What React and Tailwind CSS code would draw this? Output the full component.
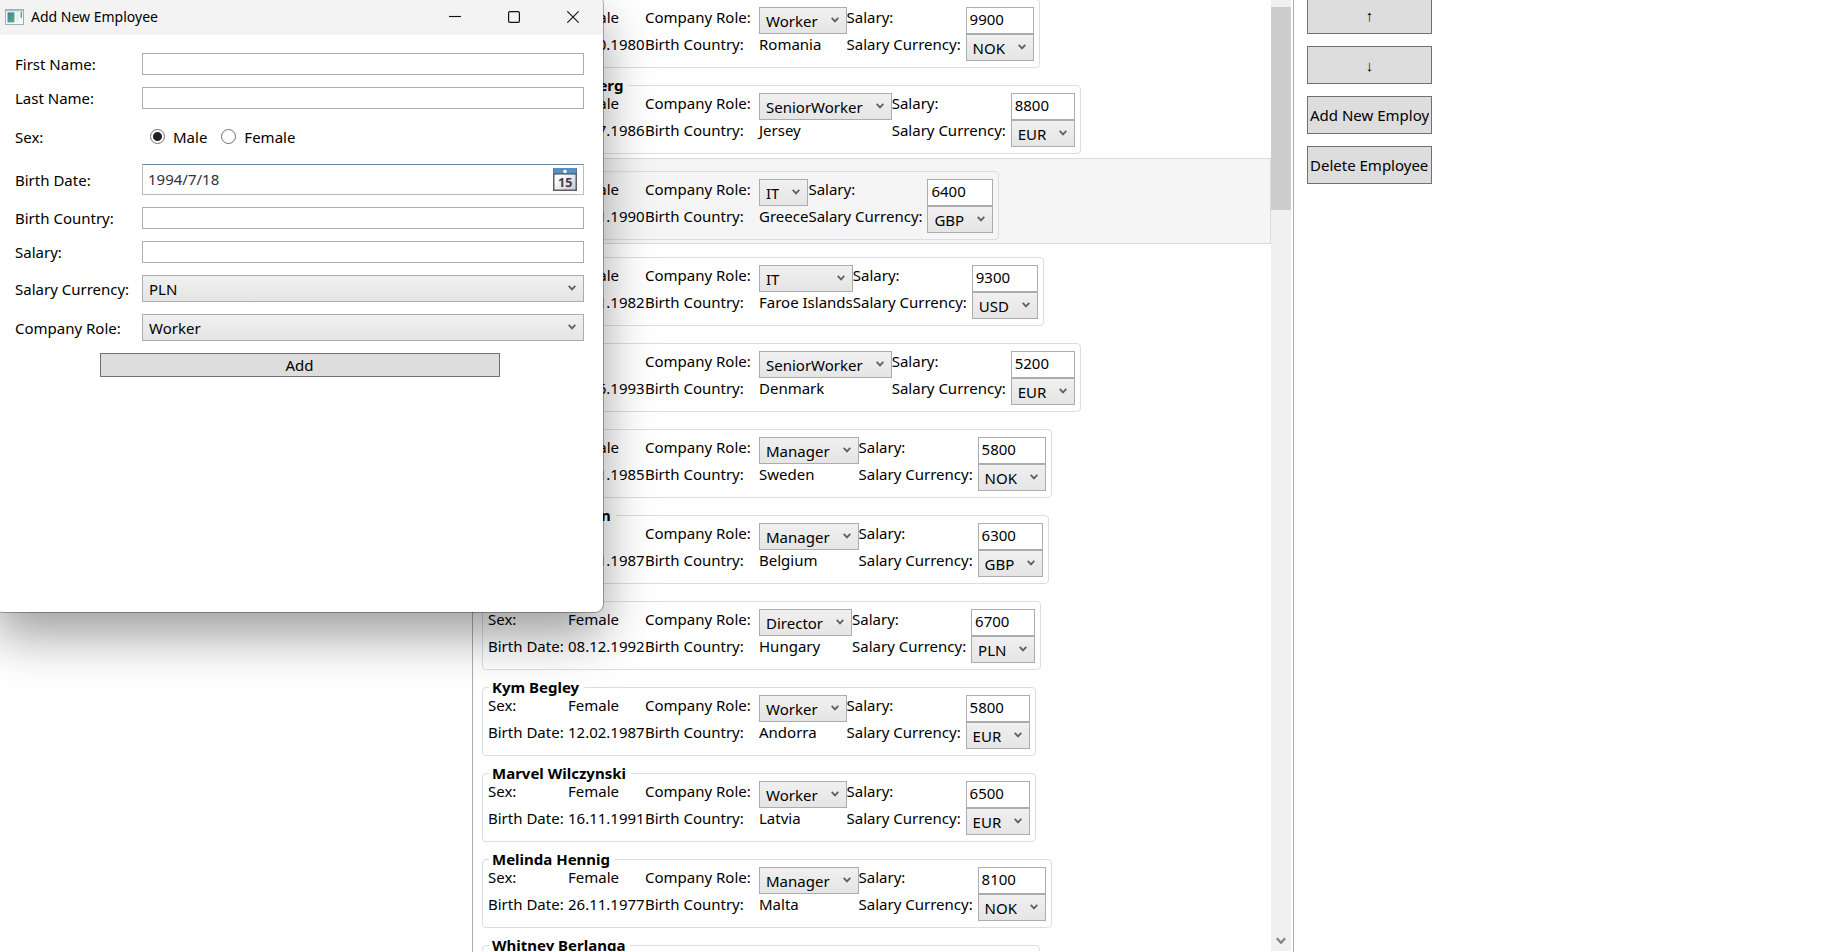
import { useState } from 'react';

const ROLES = ['Worker', 'SeniorWorker', 'IT', 'Manager', 'Director'];
const CURRENCIES = ['PLN', 'EUR', 'USD', 'GBP', 'NOK'];

const EMPLOYEES = [
  { name: 'Carla Dunn', sex: 'Female', born: '14.10.1980', role: 'Worker', country: 'Romania', salary: '9900', currency: 'NOK' },
  { name: 'Charlotte Solberg', sex: 'Female', born: '03.07.1986', role: 'SeniorWorker', country: 'Jersey', salary: '8800', currency: 'EUR' },
  { name: 'Nora Hale', sex: 'Female', born: '22.11.1990', role: 'IT', country: 'Greece', salary: '6400', currency: 'GBP' },
  { name: 'Ida Moss', sex: 'Female', born: '09.11.1982', role: 'IT', country: 'Faroe Islands', salary: '9300', currency: 'USD' },
  { name: 'Paul Reed', sex: 'Male', born: '17.06.1993', role: 'SeniorWorker', country: 'Denmark', salary: '5200', currency: 'EUR' },
  { name: 'Rita Cole', sex: 'Female', born: '28.11.1985', role: 'Manager', country: 'Sweden', salary: '5800', currency: 'NOK' },
  { name: 'Bradley Morgan', sex: 'Male', born: '05.11.1987', role: 'Manager', country: 'Belgium', salary: '6300', currency: 'GBP' },
  { name: 'Anna Lake', sex: 'Female', born: '08.12.1992', role: 'Director', country: 'Hungary', salary: '6700', currency: 'PLN' },
  { name: 'Kym Begley', sex: 'Female', born: '12.02.1987', role: 'Worker', country: 'Andorra', salary: '5800', currency: 'EUR' },
  { name: 'Marvel Wilczynski', sex: 'Female', born: '16.11.1991', role: 'Worker', country: 'Latvia', salary: '6500', currency: 'EUR' },
  { name: 'Melinda Hennig', sex: 'Female', born: '26.11.1977', role: 'Manager', country: 'Malta', salary: '8100', currency: 'NOK' },
  { name: 'Whitney Berlanga', sex: 'Female', born: '19.04.1984', role: 'Worker', country: 'Norway', salary: '7200', currency: 'NOK' },
];

function Chevron({ className }) {
  return (
    <svg viewBox="0 0 8 6" fill="none" stroke="currentColor" strokeWidth="1.8" aria-hidden="true" className={className}>
      <path d="M0.7 0.8 4 4.4 7.3 0.8" />
    </svg>
  );
}

function Combo({ id, value, options, height }) {
  return (
    <div className={`relative ${height}`}>
      <select
        id={id}
        defaultValue={value}
        className="field-sizing-content h-full w-full appearance-none border border-[#acacac] bg-linear-to-b from-[#f0f0f0] to-[#e5e5e5] pl-1.5 pr-7 leading-5 outline-none"
      >
        {options.map((o) => (
          <option key={o}>{o}</option>
        ))}
      </select>
      <Chevron className="pointer-events-none absolute right-2 top-1/2 -mt-1 h-1.5 w-2 text-[#606060]" />
    </div>
  );
}

function EmployeeItem({ employee, index, selected, onSelect }) {
  const id = `employee-${index}`;
  return (
    <li
      onClick={onSelect}
      className={`border px-2 pt-1 pb-[3px] ${selected ? 'border-[#dadada] bg-[#f5f5f5]' : 'border-transparent'}`}
    >
      <fieldset className="w-fit rounded border border-[#d5dfe5] px-[5px] pb-1.5">
        <legend className="ml-px pl-[3px] pr-[5px] font-bold leading-4">{employee.name}</legend>
        <div className="grid grid-cols-[80px_77px_114px_max-content_119px_max-content] grid-rows-[27px_27px] whitespace-nowrap leading-5">
          <span>Sex:</span>
          <span>{employee.sex}</span>
          <label htmlFor={`${id}-role`}>Company Role:</label>
          <Combo id={`${id}-role`} value={employee.role} options={ROLES} height="h-[27px]" />
          <label htmlFor={`${id}-salary`}>Salary:</label>
          <input
            id={`${id}-salary`}
            defaultValue={employee.salary}
            className="h-[27px] w-0 min-w-full border border-[#abadb3] bg-white pl-[3px] pb-1 leading-5 outline-none"
          />
          <span>Birth Date:</span>
          <span>{employee.born}</span>
          <span>Birth Country:</span>
          <span>{employee.country}</span>
          <label htmlFor={`${id}-currency`}>Salary Currency:</label>
          <Combo id={`${id}-currency`} value={employee.currency} options={CURRENCIES} height="h-[27px]" />
        </div>
      </fieldset>
    </li>
  );
}

function ScrollBar() {
  return (
    <div className="mr-0.5 flex w-5 shrink-0 flex-col bg-[#f0f0f0]" aria-hidden="true">
      <div className="h-[7px] shrink-0" />
      <div className="h-[203px] shrink-0 bg-[#cdcdcd]" />
      <div className="flex-1" />
      <div className="flex h-5 shrink-0 items-center justify-center">
        <Chevron className="h-2 w-2.5 text-[#858585]" />
      </div>
    </div>
  );
}

function SideButton({ children, align }) {
  return (
    <button type="button" className="h-[38px] w-[125px] border border-[#707070] bg-[#dddddd] px-0.5">
      <span className={`block overflow-hidden whitespace-nowrap leading-6 ${align}`}>{children}</span>
    </button>
  );
}

function TextRow({ id, label }) {
  return (
    <>
      <label htmlFor={id}>{label}</label>
      <input id={id} type="text" className="h-[22px] w-full border border-[#abadb3] bg-white px-1 outline-none" />
    </>
  );
}

function CalendarIcon() {
  return (
    <svg viewBox="0 0 24 23" className="h-[23px] w-6" aria-hidden="true">
      <defs>
        <linearGradient id="cal-page" x1="0" y1="0" x2="1" y2="1">
          <stop offset="0.3" stopColor="#ffffff" />
          <stop offset="1" stopColor="#c4c8d0" />
        </linearGradient>
      </defs>
      <rect x="0.75" y="0.75" width="22.5" height="21.5" fill="url(#cal-page)" stroke="#5d5f66" strokeWidth="1.5" />
      <rect x="0.5" y="0" width="23" height="6" fill="#5591c4" />
      <rect x="0.5" y="5.5" width="23" height="1" fill="#3c4650" />
      <circle cx="12" cy="3.5" r="1.8" fill="#fff" />
      <text x="12.2" y="19.2" textAnchor="middle" fontSize="12.5" fontWeight="700" fill="#3f4046" fontFamily="Noto Sans, sans-serif">15</text>
    </svg>
  );
}

function WindowIcon() {
  return (
    <svg viewBox="0 0 19 16" className="h-4 w-[19px]" aria-hidden="true">
      <defs>
        <linearGradient id="app-pane" x1="0" y1="0" x2="1" y2="1">
          <stop offset="0" stopColor="#3f7fa8" />
          <stop offset="1" stopColor="#5fae78" />
        </linearGradient>
      </defs>
      <rect x="0.5" y="0.5" width="18" height="15" fill="#f8f9fa" stroke="#a4abb3" />
      <rect x="1" y="1" width="17" height="1.4" fill="#b9c0c7" />
      <rect x="2.5" y="3.4" width="7" height="10" fill="url(#app-pane)" />
      <rect x="11" y="3.4" width="3" height="10" fill="#eceff1" />
      <rect x="15.6" y="2.8" width="1.4" height="6" fill="#55a07c" />
    </svg>
  );
}

function AddEmployeeDialog() {
  return (
    <section
      role="dialog"
      aria-labelledby="dialog-title"
      className="absolute -left-[5px] -top-1 flex h-[616px] w-[608px] flex-col overflow-hidden rounded-lg bg-white shadow-[0_0_0_1px_rgba(0,0,0,0.3),0_24px_50px_rgba(0,0,0,0.38)]"
    >
      <header className="flex h-[39px] shrink-0 items-center bg-[#f3f3f3] pl-2.5 pr-px pt-0.5">
        <WindowIcon />
        <h1 id="dialog-title" className="ml-[7px] flex-1 text-sm">Add New Employee</h1>
        <div className="flex">
          <button type="button" aria-label="Minimize" className="flex h-8 w-[59px] items-center justify-center">
            <svg viewBox="0 0 12 12" className="size-3" stroke="#111" strokeWidth="1.1"><path d="M0 5.5h12" /></svg>
          </button>
          <button type="button" aria-label="Maximize" className="flex h-8 w-[59px] items-center justify-center">
            <svg viewBox="0 0 12 12" className="size-3" fill="none" stroke="#111" strokeWidth="1.2"><rect x="0.6" y="0.6" width="10.8" height="10.8" rx="1.4" /></svg>
          </button>
          <button type="button" aria-label="Close" className="flex h-8 w-[59px] items-center justify-center">
            <svg viewBox="0 0 12 12" className="size-3" stroke="#111" strokeWidth="1.1"><path d="M0.3 0.3 11.7 11.7M11.7 0.3 0.3 11.7" /></svg>
          </button>
        </div>
      </header>
      <form className="flex flex-col pl-5 pr-[19px] pt-[18px] leading-5" onSubmit={(e) => e.preventDefault()}>
        <div className="grid grid-cols-[127px_1fr] items-center gap-y-3">
          <TextRow id="first-name" label="First Name:" />
          <TextRow id="last-name" label="Last Name:" />
        </div>
        <div role="radiogroup" aria-labelledby="sex-label" className="grid h-[55px] grid-cols-[127px_1fr] items-center">
          <span id="sex-label">Sex:</span>
          <div className="flex items-center gap-3.5 pl-2">
            {['Male', 'Female'].map((sex) => (
              <label key={sex} className="flex items-center gap-2">
                <input
                  type="radio"
                  name="sex"
                  defaultChecked={sex === 'Male'}
                  className="size-[15px] appearance-none rounded-full border border-[#707070] bg-white checked:bg-[radial-gradient(circle,#212121_4px,#fff_5px)]"
                />
                {sex}
              </label>
            ))}
          </div>
        </div>
        <div className="grid grid-cols-[127px_1fr] items-center gap-y-3">
          <label htmlFor="birth-date">Birth Date:</label>
          <div className="flex h-[31px] items-center border border-[#b0bfcd] border-t-[#738a9c] bg-white pl-[5px] pr-1.5">
            <input id="birth-date" type="text" defaultValue="1994/7/18" className="min-w-0 flex-1 pb-0.5 leading-5 text-[#333333] outline-none" />
            <button type="button" aria-label="Open calendar"><CalendarIcon /></button>
          </div>
          <TextRow id="birth-country" label="Birth Country:" />
          <TextRow id="salary" label="Salary:" />
          <label htmlFor="currency">Salary Currency:</label>
          <Combo id="currency" value="PLN" options={CURRENCIES} height="h-[27px]" />
          <label htmlFor="role">Company Role:</label>
          <Combo id="role" value="Worker" options={ROLES} height="h-[27px]" />
        </div>
        <button type="submit" className="mx-auto mt-3 h-6 w-[400px] border border-[#707070] bg-[#dddddd]">Add</button>
      </form>
    </section>
  );
}

export default function App() {
  const [selected, setSelected] = useState(2);
  return (
    <div className="relative h-screen overflow-hidden bg-white font-['Noto_Sans','Open_Sans',sans-serif] text-[15px] text-black">
      <main className="grid h-full grid-cols-[472px_minmax(0,1fr)_548px]">
        <div />
        <div className="flex min-h-0 border-x border-[#abadb3] pb-px">
          <ul className="-mt-3.5 min-w-0 flex-1 overflow-hidden">
            {EMPLOYEES.map((e, i) => (
              <EmployeeItem key={e.name} employee={e} index={i} selected={i === selected} onSelect={() => setSelected(i)} />
            ))}
          </ul>
          <ScrollBar />
        </div>
        <div className="-mt-1 flex flex-col gap-3 pl-[13px]">
          <SideButton align="text-center">↑</SideButton>
          <SideButton align="text-center">↓</SideButton>
          <SideButton align="text-left">Add New Employee</SideButton>
          <SideButton align="text-left">Delete Employee</SideButton>
        </div>
      </main>
      <AddEmployeeDialog />
    </div>
  );
}
